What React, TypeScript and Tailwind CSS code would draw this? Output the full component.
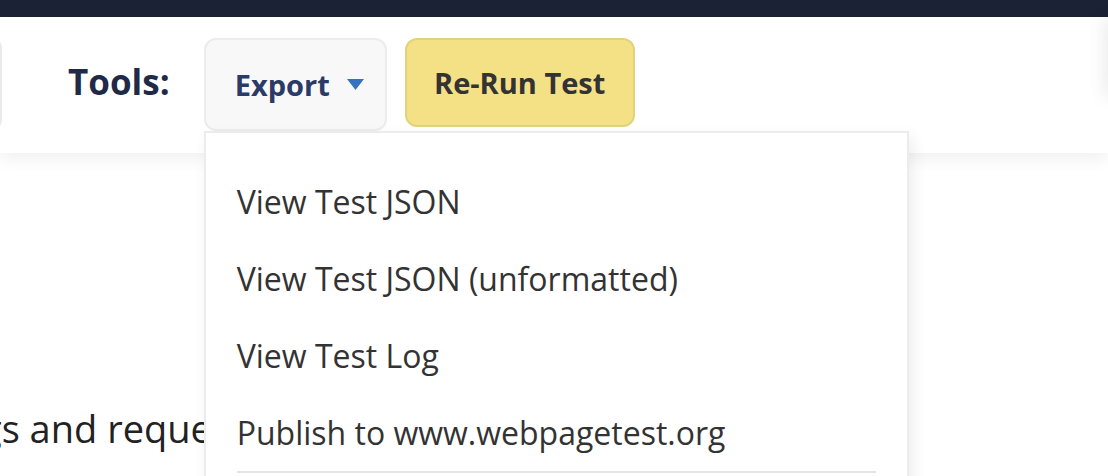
import { useState } from 'react';

const exportItems = [
  'View Test JSON',
  'View Test JSON (unformatted)',
  'View Test Log',
  'Publish to www.webpagetest.org',
];

export default function App() {
  const [open] = useState(true);

  return (
    <div className="h-[476px] w-full overflow-hidden bg-white font-['Open_Sans',sans-serif]">
      {/* Top nav strip */}
      <div className="h-[17px] bg-[#1b2236]" />

      {/* Toolbar */}
      <div className="relative z-10 flex items-start bg-white pt-[21px] pb-[22px] shadow-[0_8px_14px_rgba(0,0,0,0.05)]">
        <div className="-ml-[98px] h-[92px] w-[100px] shrink-0 rounded-[10px] border-2 border-[#ebebeb] bg-white" />

        <h2 className="ml-[66px] mt-[19px] text-[35px] leading-[50px] font-bold text-[#1f2a48]">Tools:</h2>

        <div className="relative ml-[34px]">
          <button className="flex h-[93px] w-[183px] items-center rounded-[12px] border-2 border-[#ececec] bg-[#f8f8f8] pl-[29px] text-[29px] font-bold text-[#2b3a67]">
            Export
            <svg width="17" height="11" viewBox="0 0 17 11" className="ml-[17px]">
              <polygon points="0,0 17,0 8.5,11" fill="#3573c0" />
            </svg>
          </button>

          {open && (
            <div className="absolute left-0 top-full w-[705px] border-2 border-[#ececec] bg-white px-[31px] pt-[30px] pb-[20px] shadow-[4px_6px_14px_rgba(0,0,0,0.07)]">
              {exportItems.map((item) => (
                <div key={item} className="h-[77px] whitespace-nowrap text-[32px] leading-[77px] text-[#333]">
                  {item}
                </div>
              ))}
              <div className="h-[2px] bg-[#e4e4e4]" />
            </div>
          )}
        </div>

        <button className="ml-[18px] h-[89px] w-[230px] rounded-[12px] border-2 border-[#e3d27c] bg-[#f5e185] text-[29px] font-bold text-[#333]">
          Re-Run Test
        </button>

        {/* off-screen side panel casting its shadow */}
        <div className="-mt-[21px] -mr-[40px] ml-auto h-[80px] w-[40px] shrink-0 bg-white shadow-[-4px_0_18px_rgba(0,0,0,0.08)]" />
      </div>

      {/* Page content behind the menu */}
      <p className="-ml-[19px] pt-[247px] whitespace-nowrap text-[38px] leading-[57px] text-[#222]">
        gs and requests
      </p>
    </div>
  );
}
